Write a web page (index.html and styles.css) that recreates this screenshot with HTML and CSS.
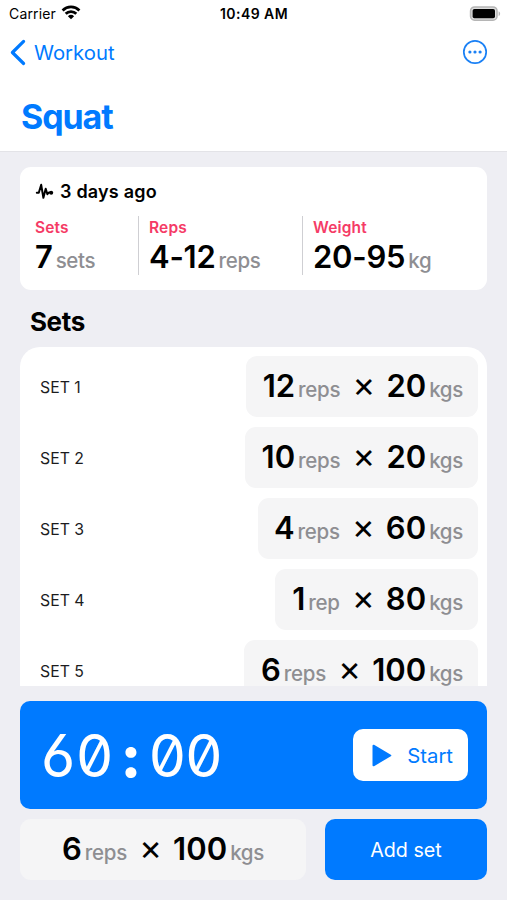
FILE: index.html
```html
<!DOCTYPE html>
<html lang="en">
<head>
<meta charset="utf-8">
<title>Squat</title>
<link rel="stylesheet" href="styles.css">
</head>
<body>
<div class="app">
  <header class="header">
    <div class="status">
      <div class="carrier"><span>Carrier</span>
        <svg width="20" height="15" viewBox="0 0 20 15" fill="none" stroke="#000" stroke-width="2.8"><path d="M1.6 5.4a12 12 0 0 1 16.8 0M4.7 8.8a7.5 7.5 0 0 1 10.6 0"/><path d="M10 14.3 6.9 11.2a4.5 4.5 0 0 1 6.2 0z" fill="#000" stroke="none"/></svg>
      </div>
      <div class="clock">10:49 AM</div>
      <svg class="battery" width="32" height="16" viewBox="0 0 32 16"><rect x="1.6" y="1" width="26.4" height="13.2" rx="4" fill="#ddd" stroke="#b5b5b5" stroke-width="1.6"/><rect x="3.6" y="3" width="22.4" height="9.2" rx="1.8"/><path d="M29.6 5.2c2 .7 2 4.1 0 4.8z" fill="#b5b5b5"/></svg>
    </div>
    <nav class="nav">
      <div class="back">
        <svg width="16" height="27" viewBox="0 0 16 27" fill="none" stroke="#007aff" stroke-width="3.2" stroke-linecap="round" stroke-linejoin="round"><path d="M13.6 2.4 2.4 13.5l11.2 11"/></svg>
        <span>Workout</span>
      </div>
      <svg width="26" height="26" viewBox="0 0 26 26" fill="#1a80f5"><circle cx="13" cy="13" r="11.2" fill="none" stroke="#1a80f5" stroke-width="1.7"/><circle cx="7.9" cy="13" r="1.6"/><circle cx="13" cy="13" r="1.6"/><circle cx="18.1" cy="13" r="1.6"/></svg>
    </nav>
    <h1 class="title">Squat</h1>
  </header>

  <section class="summary">
    <div class="when">
      <svg width="19" height="19" viewBox="0 0 19 19" fill="none" stroke="#000" stroke-width="2" stroke-linecap="round" stroke-linejoin="round"><path d="M1.8 10.8h2L6.2 2.8l2.2 13 2.3-9 1.7 5.4 1.4-1.6h2"/><circle cx="16.2" cy="10.8" r="2" fill="#000" stroke="none"/></svg>
      <span>3 days ago</span>
    </div>
    <div class="stats">
      <div class="stat"><div class="label">Sets</div><div class="value"><b>7</b><i>sets</i></div></div>
      <div class="stat"><div class="label">Reps</div><div class="value"><b>4-12</b><i>reps</i></div></div>
      <div class="stat"><div class="label">Weight</div><div class="value"><b>20-95</b><i>kg</i></div></div>
    </div>
  </section>

  <h2 class="heading">Sets</h2>
  <section class="list">
    <div class="row"><span class="name">SET 1</span><div class="pill w1"><b>12</b><i>reps</i><em>×</em><b>20</b><i>kgs</i></div></div>
    <div class="row"><span class="name">SET 2</span><div class="pill w2"><b>10</b><i>reps</i><em>×</em><b>20</b><i>kgs</i></div></div>
    <div class="row"><span class="name">SET 3</span><div class="pill w3"><b>4</b><i>reps</i><em>×</em><b>60</b><i>kgs</i></div></div>
    <div class="row"><span class="name">SET 4</span><div class="pill w4"><b>1</b><i>rep</i><em>×</em><b>80</b><i>kgs</i></div></div>
    <div class="row"><span class="name">SET 5</span><div class="pill w5"><b>6</b><i>reps</i><em>×</em><b>100</b><i>kgs</i></div></div>
  </section>

  <section class="timer">
    <div class="time"><span>6</span><span>0</span><span class="colon">:</span><span>0</span><span>0</span></div>
    <div class="start">
      <svg width="20" height="23" viewBox="0 0 20 23" fill="#007aff" stroke="#007aff" stroke-width="2" stroke-linejoin="round"><path d="M1.5 1.7v19.6L18.3 11.5z"/></svg>
      <span>Start</span>
    </div>
  </section>
  <section class="entry">
    <div class="pill current"><b>6</b><i>reps</i><em>×</em><b>100</b><i>kgs</i></div>
    <div class="add">Add set</div>
  </section>
</div>
</body>
</html>
```
FILE: styles.css
```css
* { box-sizing: border-box; margin: 0; }
body { background: #eeeef3; font-family: Inter, sans-serif; color: #000; }
svg { display: block; flex: none; }
b { font-weight: 600; }
i, em { font-style: normal; }
.app { width: 507px; height: 900px; overflow: hidden; display: flex; flex-direction: column; }
.header { height: 152px; flex: none; background: #fff; border-bottom: 1px solid #e3e3e7; }
.status { height: 27px; display: grid; grid-template-columns: 1fr auto 1fr; align-items: center; padding: 0 6px 0 9px; font-size: 14px; }
.carrier { display: flex; align-items: center; gap: 5px; letter-spacing: .15px; }
.carrier svg { margin-top: -3px; }
.clock { font-weight: 600; font-size: 14px; letter-spacing: .45px; margin-right: 2px; }
.battery { justify-self: end; }
.nav { height: 50px; display: flex; align-items: center; justify-content: space-between; padding: 0 19px 0 10px; }
.back { display: flex; align-items: center; gap: 8px; color: #007aff; font-size: 20.3px; }
.title { margin: 19px 0 0 21px; font-size: 34px; line-height: 42px; font-weight: 700; letter-spacing: -1.1px; color: #007aff; }
.summary { margin: 15px 20px 0; height: 123px; flex: none; background: #fff; border-radius: 11px; padding: 12px 15px 0; }
.when { display: flex; align-items: center; gap: 6px; height: 24px; font-size: 18px; font-weight: 600; letter-spacing: .2px; }
.stats { display: grid; grid-template-columns: 103px 164px 1fr; margin-top: 13px; height: 59px; }
.stat + .stat { border-left: 1px solid #cfcfd3; padding-left: 10px; }
.label { font-size: 15.5px; line-height: 24px; font-weight: 600; letter-spacing: .15px; color: #f53b66; }
.value, .pill { display: flex; align-items: baseline; white-space: nowrap; font-size: 31px; line-height: 34px; }
.value { height: 35px; }
.value b { letter-spacing: -.25px; }
.value i, .pill i { font-size: 20.5px; font-weight: 450; letter-spacing: -.3px; color: #8e8e92; margin-left: 3px; }
.heading { margin: 14px 0 0 30px; font-size: 26px; line-height: 35px; font-weight: 700; letter-spacing: -.4px; }
.list { margin: 8px 20px 0; padding: 9px 9px 0 20px; height: 339px; flex: none; overflow: hidden; background: #fff; border-radius: 20px 20px 0 0; }
.row { height: 71px; display: flex; align-items: flex-start; justify-content: space-between; }
.name { font-size: 15.8px; line-height: 63px; color: #1c1c1e; }
.pill { background: #f5f5f6; border-radius: 11px; height: 61px; padding: 13px 15px 0 0; justify-content: flex-end; }
.pill em { font-size: 35px; font-weight: 400; margin: 0 11px 0 12px; line-height: 30px; }
.w1 { width: 232px; }
.w2 { width: 233px; }
.w3 { width: 220px; }
.w4 { width: 203px; }
.w5 { width: 234px; }
.timer { margin: 15px 20px 0; height: 108px; flex: none; background: #007aff; border-radius: 10px; display: flex; align-items: center; justify-content: space-between; padding: 0 19px 0 20px; }
.time { display: flex; color: #fff; font-size: 59px; font-weight: 400; font-feature-settings: "tnum", "zero", "ss01"; }
.time span { width: 36.4px; display: flex; justify-content: center; }
.time .colon { font-weight: 800; }
.start { width: 115px; height: 52px; background: #fff; border-radius: 10px; color: #007aff; display: flex; align-items: center; justify-content: space-between; padding: 0 15px 0 19px; font-size: 20.3px; }
.entry { margin: 10px 20px 0; display: flex; justify-content: space-between; }
.current { width: 286px; justify-content: center; padding-right: 0; }
.add { width: 162px; height: 61px; line-height: 63px; border-radius: 10px; background: #007aff; color: #fff; text-align: center; font-size: 19.7px; }
```
